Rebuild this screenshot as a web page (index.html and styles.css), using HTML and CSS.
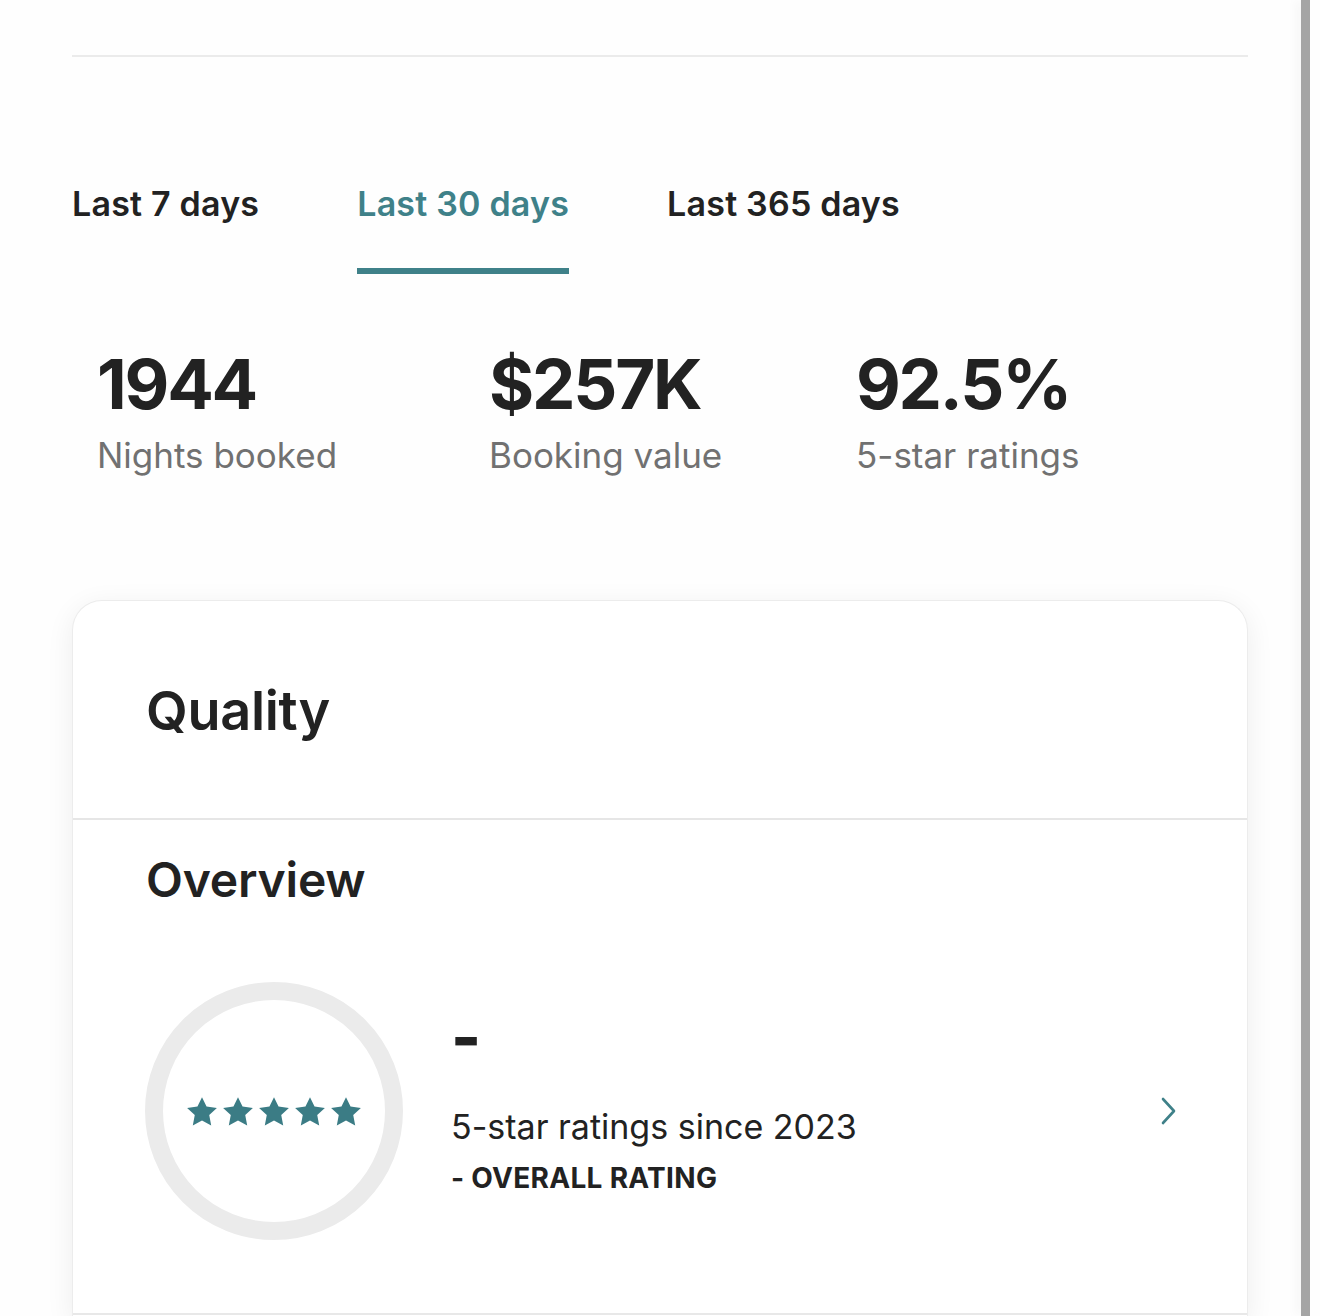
FILE: index.html
```html
<!DOCTYPE html>
<html lang="en">
<head>
<meta charset="utf-8">
<title>Performance</title>
<link rel="stylesheet" href="styles.css">
</head>
<body>
<div class="screen">
  <main class="content">
    <hr class="top-rule">

    <nav class="tabs">
      <button class="tab">Last 7 days</button>
      <button class="tab tab-active">Last 30 days</button>
      <button class="tab">Last 365 days</button>
    </nav>

    <section class="stats">
      <div class="stat">
        <div class="stat-value">1944</div>
        <div class="stat-label">Nights booked</div>
      </div>
      <div class="stat">
        <div class="stat-value">$257K</div>
        <div class="stat-label">Booking value</div>
      </div>
      <div class="stat">
        <div class="stat-value">92.5%</div>
        <div class="stat-label">5-star ratings</div>
      </div>
    </section>

    <section class="card">
      <header class="card-head">
        <h2 class="card-title">Quality</h2>
      </header>
      <div class="card-body">
        <h3 class="section-title">Overview</h3>
        <a class="overview-row" href="#">
          <div class="rating-ring">
            <div class="stars">
              <svg viewBox="0 0 24 24" class="star"><path d="M12 1.5l3.2 6.7 7.3.9-5.4 5.1 1.4 7.3L12 18l-6.5 3.5 1.4-7.3-5.4-5.1 7.3-.9z"/></svg>
              <svg viewBox="0 0 24 24" class="star"><path d="M12 1.5l3.2 6.7 7.3.9-5.4 5.1 1.4 7.3L12 18l-6.5 3.5 1.4-7.3-5.4-5.1 7.3-.9z"/></svg>
              <svg viewBox="0 0 24 24" class="star"><path d="M12 1.5l3.2 6.7 7.3.9-5.4 5.1 1.4 7.3L12 18l-6.5 3.5 1.4-7.3-5.4-5.1 7.3-.9z"/></svg>
              <svg viewBox="0 0 24 24" class="star"><path d="M12 1.5l3.2 6.7 7.3.9-5.4 5.1 1.4 7.3L12 18l-6.5 3.5 1.4-7.3-5.4-5.1 7.3-.9z"/></svg>
              <svg viewBox="0 0 24 24" class="star"><path d="M12 1.5l3.2 6.7 7.3.9-5.4 5.1 1.4 7.3L12 18l-6.5 3.5 1.4-7.3-5.4-5.1 7.3-.9z"/></svg>
            </div>
          </div>
          <div class="overview-text">
            <div class="overview-value">-</div>
            <div class="overview-desc">5-star ratings since 2023</div>
            <div class="overview-caption">- OVERALL RATING</div>
          </div>
          <svg class="chevron" viewBox="0 0 16 28" aria-hidden="true"><path d="M3 2l11 12L3 26"/></svg>
        </a>
        <div class="row-rule"></div>
      </div>
    </section>
  </main>
  <div class="edge"></div>
</div>
</body>
</html>
```

FILE: styles.css
```css
* {
  box-sizing: border-box;
}

html, body {
  margin: 0;
  padding: 0;
  background: #fefefe;
}

body {
  width: 1320px;
  height: 1316px;
  overflow: hidden;
  font-family: Inter, "Noto Sans", "Liberation Sans", sans-serif;
  color: #222222;
}

.screen {
  display: flex;
  height: 1316px;
}

.content {
  flex: 0 0 1301px;
  padding: 55px 53px 0 72px;
  background: #fefefe;
}

.edge {
  flex: 0 0 9px;
  margin-right: 10px;
  background: #a5a5a5;
  box-shadow: -6px 0 10px rgba(0, 0, 0, 0.03);
}

.top-rule {
  margin: 0;
  border: 0;
  height: 2px;
  background: #ebebeb;
}

/* period tabs */
.tabs {
  display: flex;
  gap: 98px;
  margin-top: 127px;
}

.tab {
  padding: 0 0 44px;
  margin: 0;
  border: 0;
  border-bottom: 6px solid transparent;
  background: none;
  font-family: inherit;
  font-size: 34px;
  line-height: 40px;
  font-weight: 600;
  color: #222222;
  letter-spacing: 0.2px;
}

.tab-active {
  color: #3f8189;
  border-bottom-color: #3f8189;
}

/* headline numbers */
.stats {
  display: grid;
  grid-template-columns: 392px 367px auto;
  padding-left: 25px;
  margin-top: 68px;
}

.stat-value {
  font-size: 69px;
  line-height: 84px;
  font-weight: 700;
  letter-spacing: -2.2px;
  color: #222222;
}

.stat-label {
  margin-top: 8px;
  font-size: 35px;
  line-height: 42px;
  font-weight: 400;
  color: #717171;
}

/* quality card */
.card {
  margin-top: 124px;
  background: #ffffff;
  border: 1px solid #ececec;
  border-bottom: 0;
  border-radius: 30px 30px 0 0;
  box-shadow: 0 6px 28px rgba(0, 0, 0, 0.07);
  height: 720px;
}

.card-head {
  padding: 78px 73px 75px;
  border-bottom: 2px solid #e6e6e6;
}

.card-title {
  margin: 0;
  font-size: 54px;
  line-height: 64px;
  font-weight: 600;
  letter-spacing: -0.3px;
  color: #222222;
}

.card-body {
  padding-top: 31px;
}

.section-title {
  margin: 0 73px;
  font-size: 48px;
  line-height: 58px;
  font-weight: 600;
  letter-spacing: -0.2px;
  color: #222222;
}

.overview-row {
  display: flex;
  align-items: center;
  margin: 73px 71px 0 72px;
  text-decoration: none;
  color: inherit;
}

.rating-ring {
  flex: 0 0 258px;
  height: 258px;
  border: 18px solid #ebebeb;
  border-radius: 50%;
  display: flex;
  align-items: center;
  justify-content: center;
}

.stars {
  display: flex;
  gap: 2px;
  margin-top: 2px;
}

.star {
  width: 34px;
  height: 34px;
  fill: #3b7c85;
}

.overview-text {
  flex: 1;
  margin-left: 48px;
  margin-top: -20px;
}

.overview-value {
  font-size: 64px;
  line-height: 60px;
  font-weight: 800;
  color: #222222;
}

.overview-desc {
  margin-top: 40px;
  font-size: 34px;
  line-height: 40px;
  font-weight: 400;
  color: #222222;
}

.overview-caption {
  margin-top: 14px;
  font-size: 28px;
  line-height: 34px;
  font-weight: 700;
  letter-spacing: 0.3px;
  color: #222222;
}

.chevron {
  width: 16px;
  height: 28px;
  fill: none;
  stroke: #3f8189;
  stroke-width: 2.6;
  stroke-linecap: round;
  stroke-linejoin: round;
}

.row-rule {
  margin-top: 73px;
  height: 2px;
  background: #e8e8e8;
}
```
